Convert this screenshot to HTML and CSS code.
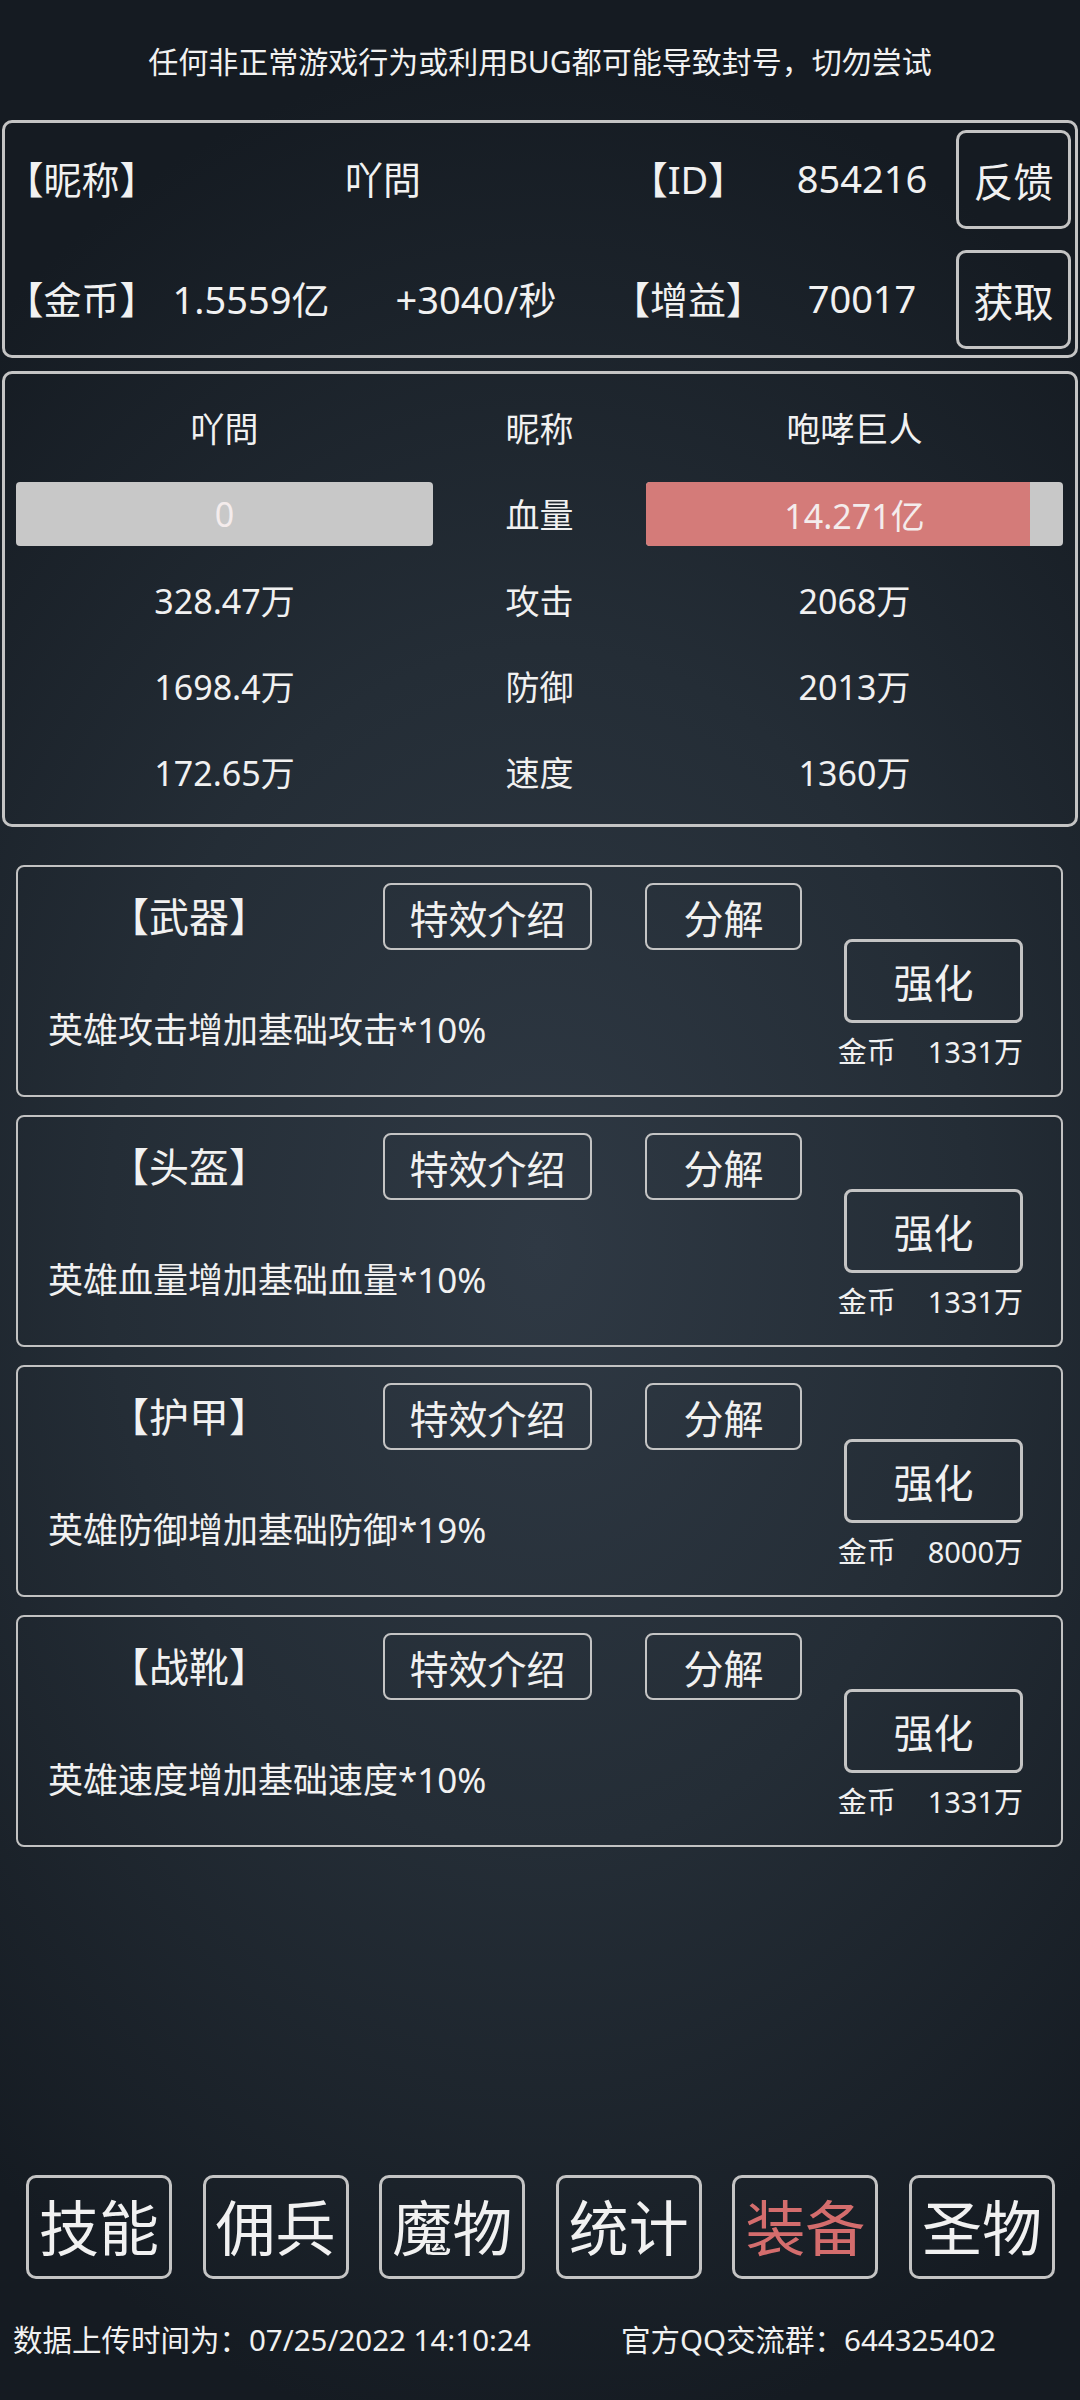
FILE: index.html
```html
<!DOCTYPE html>
<html lang="zh">
<head>
  <meta charset="UTF-8">
  <meta name="viewport" content="width=device-width, initial-scale=1">
  <title>装备</title>
  <link rel="stylesheet" href="styles.css">
</head>
<body>
  <div class="notice">任何非正常游戏行为或利用BUG都可能导致封号，切勿尝试</div>

  <div class="profile">
    <span>【昵称】</span>
    <span class="span2">吖問</span>
    <span>【ID】</span>
    <span>854216</span>
    <button class="btn">反馈</button>

    <span>【金币】</span>
    <span>1.5559亿</span>
    <span>+3040/秒</span>
    <span>【增益】</span>
    <span>70017</span>
    <button class="btn">获取</button>
  </div>

  <div class="stats">
    <span>吖問</span>
    <span>昵称</span>
    <span>咆哮巨人</span>

    <div class="bar"><span class="bar-text">0</span></div>
    <span>血量</span>
    <div class="bar"><div class="bar-fill" style="width: 92%"></div><span class="bar-text">14.271亿</span></div>

    <span>328.47万</span>
    <span>攻击</span>
    <span>2068万</span>

    <span>1698.4万</span>
    <span>防御</span>
    <span>2013万</span>

    <span>172.65万</span>
    <span>速度</span>
    <span>1360万</span>
  </div>

  <div class="gear-list">
    <div class="gear">
      <div class="gear-main">
        <div class="gear-top">
          <span class="gear-name">【武器】</span>
          <button class="btn btn-info">特效介绍</button>
          <button class="btn btn-split">分解</button>
        </div>
        <div class="gear-desc">英雄攻击增加基础攻击*10%</div>
      </div>
      <div class="gear-side">
        <button class="btn btn-up">强化</button>
        <div class="cost">金币<span>1331万</span></div>
      </div>
    </div>

    <div class="gear">
      <div class="gear-main">
        <div class="gear-top">
          <span class="gear-name">【头盔】</span>
          <button class="btn btn-info">特效介绍</button>
          <button class="btn btn-split">分解</button>
        </div>
        <div class="gear-desc">英雄血量增加基础血量*10%</div>
      </div>
      <div class="gear-side">
        <button class="btn btn-up">强化</button>
        <div class="cost">金币<span>1331万</span></div>
      </div>
    </div>

    <div class="gear">
      <div class="gear-main">
        <div class="gear-top">
          <span class="gear-name">【护甲】</span>
          <button class="btn btn-info">特效介绍</button>
          <button class="btn btn-split">分解</button>
        </div>
        <div class="gear-desc">英雄防御增加基础防御*19%</div>
      </div>
      <div class="gear-side">
        <button class="btn btn-up">强化</button>
        <div class="cost">金币<span>8000万</span></div>
      </div>
    </div>

    <div class="gear">
      <div class="gear-main">
        <div class="gear-top">
          <span class="gear-name">【战靴】</span>
          <button class="btn btn-info">特效介绍</button>
          <button class="btn btn-split">分解</button>
        </div>
        <div class="gear-desc">英雄速度增加基础速度*10%</div>
      </div>
      <div class="gear-side">
        <button class="btn btn-up">强化</button>
        <div class="cost">金币<span>1331万</span></div>
      </div>
    </div>
  </div>

  <div class="nav">
    <button class="btn nav-btn">技能</button>
    <button class="btn nav-btn">佣兵</button>
    <button class="btn nav-btn">魔物</button>
    <button class="btn nav-btn">统计</button>
    <button class="btn nav-btn active">装备</button>
    <button class="btn nav-btn">圣物</button>
  </div>

  <div class="footer">
    <span>数据上传时间为：07/25/2022 14:10:24</span>
    <span>官方QQ交流群：644325402</span>
  </div>
</body>
</html>
```

FILE: styles.css
```css
html, body {
  margin: 0;
  padding: 0;
}
body {
  width: 1080px;
  height: 2400px;
  display: flex;
  flex-direction: column;
  font-family: "Noto Sans", "Noto Sans CJK SC", sans-serif;
  color: #f1f1f1;
  background: radial-gradient(ellipse 80% 50% at 50% 52%, #2f3944 0%, #242d36 50%, #151b22 100%);
  background-color: #161c23;
  overflow: hidden;
}
.btn {
  font-family: inherit;
  color: #f1f1f1;
  background: transparent;
  border: 2px solid #c4c4c4;
  border-radius: 8px;
  padding: 0;
  cursor: pointer;
}
.notice {
  height: 120px;
  display: flex;
  align-items: center;
  justify-content: center;
  font-size: 30px;
}
.profile {
  margin: 0 2px;
  border: 3px solid #c4c4c4;
  border-radius: 10px;
  padding: 7px 0 6px 0;
  box-sizing: border-box;
  height: 238px;
  display: grid;
  grid-template-columns: 153px 186px 264px 160px 188px 1fr;
  grid-template-rows: 99px 99px;
  row-gap: 21px;
  align-items: center;
  text-align: center;
  font-size: 38px;
}
.profile span {
  margin-bottom: 4px;
}
.profile .span2 {
  grid-column: span 2;
}
.profile .btn {
  width: 115px;
  height: 99px;
  font-size: 40px;
  border-width: 3px;
  border-radius: 10px;
  justify-self: start;
  margin-left: 0;
}
.stats {
  margin: 13px 2px 0 2px;
  height: 456px;
  box-sizing: border-box;
  border: 3px solid #c4c4c4;
  border-radius: 10px;
  padding: 10px 12px 10px 11px;
  display: grid;
  grid-template-columns: 417px 213px 417px;
  grid-auto-rows: 86px;
  align-items: center;
  text-align: center;
  font-size: 34px;
}
.bar {
  position: relative;
  height: 64px;
  margin-top: 2px;
  background: #c8c8c8;
  border-radius: 4px;
  overflow: hidden;
  display: flex;
  align-items: center;
  justify-content: center;
}
.bar-fill {
  position: absolute;
  left: 0;
  top: 0;
  bottom: 0;
  background: #d47b79;
}
.bar-text {
  position: relative;
  color: #f4ecec;
}
.gear-list {
  margin: 38px 17px 0 16px;
  display: flex;
  flex-direction: column;
  gap: 18px;
}
.gear {
  height: 232px;
  box-sizing: border-box;
  border: 2px solid #c2c2c2;
  border-radius: 8px;
  display: flex;
}
.gear-main {
  display: flex;
  flex-direction: column;
}
.gear-top {
  display: flex;
  align-items: center;
  margin-top: 16px;
}
.gear-name {
  width: 342px;
  text-align: center;
  font-size: 40px;
  margin-bottom: 4px;
}
.btn-info {
  margin-left: 23px;
  width: 209px;
  height: 67px;
  font-size: 39px;
}
.btn-split {
  margin-left: 53px;
  width: 157px;
  height: 67px;
  font-size: 40px;
}
.gear-desc {
  margin-top: 57px;
  padding-left: 30px;
  font-size: 35px;
  line-height: 46px;
}
.gear-side {
  margin-left: auto;
  margin-right: 38px;
  display: flex;
  flex-direction: column;
  align-items: flex-end;
}
.btn-up {
  margin-top: 72px;
  width: 179px;
  height: 84px;
  font-size: 40px;
  border-width: 3px;
}
.cost {
  margin-top: 11px;
  font-size: 29px;
  line-height: 36px;
}
.cost span {
  margin-left: 32px;
}
.nav {
  margin-top: auto;
  padding: 0 25px 0 26px;
  display: flex;
  justify-content: space-between;
}
.nav-btn {
  width: 146px;
  height: 104px;
  font-size: 60px;
  border-width: 3px;
  border-radius: 10px;
  padding-bottom: 4px;
}
.nav-btn.active {
  color: #d46d6d;
}
.footer {
  margin-top: 41px;
  margin-bottom: 40px;
  padding-left: 13px;
  display: grid;
  grid-template-columns: 608px auto;
  font-size: 29.5px;
  line-height: 40px;
}
```
